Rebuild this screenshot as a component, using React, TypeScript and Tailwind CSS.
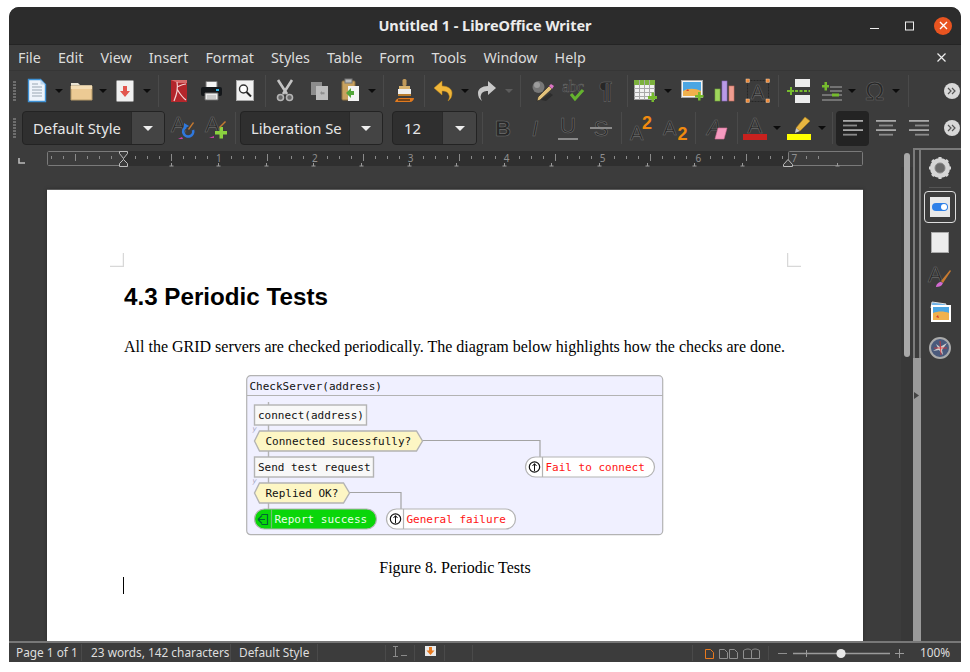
import React from "react";

const ui = "font-['Noto_Sans',sans-serif]";

function Slot({ w, children }: { w: string; children?: React.ReactNode }) {
  return <div className={`${w} flex items-center justify-center shrink-0`}>{children}</div>;
}
const Sep = ({ w }: { w: string }) => (
  <Slot w={w}><div className="w-px h-[32px] bg-[#4a4a4a]" /></Slot>
);
const Arrow = ({ w, c = "#0c0c0c" }: { w: string; c?: string }) => (
  <Slot w={w}><svg width="8" height="4"><path d="M0 0h8L4 4z" fill={c} /></svg></Slot>
);
const Grip = () => (
  <Slot w="w-[12px]">
    <div className="flex flex-col gap-[1px] -ml-[2px]">
      {Array.from({ length: 7 }).map((_, i) => <div key={i} className="w-[3px] h-[2px] bg-[#6e6e6e]" />)}
    </div>
  </Slot>
);
const Ic = ({ w = 24, h = 24, children }: { w?: number; h?: number; children: React.ReactNode }) => (
  <svg width={w} height={h} viewBox={`0 0 ${w} ${h}`} className="overflow-visible">{children}</svg>
);
const DarkA = ({ x, y, s, c = "#272727" }: { x: number; y: number; s: number; c?: string }) => (
  <text x={x} y={y} fontSize={s} fontFamily="Liberation Sans" fill={c} stroke="#6c6c6c" strokeWidth="0.6">A</text>
);
const Overflow = () => (
  <div className="w-[16px] h-[16px] rounded-full bg-[#d8d8d8] flex items-center justify-center">
    <svg width="10" height="8"><path d="M1 1l3 3-3 3M5 1l3 3-3 3" fill="none" stroke="#555" strokeWidth="1.2" /></svg>
  </div>
);

const IconNew = () => (
  <Ic w={18} h={23}>
    <path d="M.5.5h12l5 5v17H.5z" fill="#eef4fb" stroke="#3f92d6" strokeWidth="1.4" />
    <path d="M12.5.5v5h5z" fill="#bcd6ee" />
    {[5, 8, 11, 14, 17].map((y) => <path key={y} d={`M4 ${y}h${y === 5 ? 6 : 10}`} stroke="#9aa7b3" />)}
  </Ic>
);
const IconFolder = () => (
  <Ic w={23} h={21}>
    <path d="M1 3h7l2 2h12v15H1z" fill="#e8e2d2" />
    <path d="M1 6h21v14H1z" fill="#ecca94" stroke="#b69a68" />
    <path d="M1 6h21v3H1z" fill="#f4ddb4" />
  </Ic>
);
const IconSave = () => (
  <Ic w={18} h={22}>
    <rect x=".5" y=".5" width="17" height="21" rx="1" fill="#f0f0f0" stroke="#999" />
    <path d="M7 6h4v5h3l-5 6-5-6h3z" fill="#e2564e" />
  </Ic>
);
const IconPdf = () => (
  <Ic w={16} h={22}>
    <rect width="16" height="22" fill="#b3262b" />
    <path d="M0 0h16v3H7z" fill="#d76a6a" />
    <path d="M3 21C6 14 7 7 6 2M6 9c3 5 6 9 9 11M6 7c2-1 6-3 9-3" stroke="#f4d4d4" strokeWidth="1.2" fill="none" />
  </Ic>
);
const IconPrint = () => (
  <Ic w={21} h={20}>
    <path d="M5 .5h11v6H5z" fill="#f4f4f4" stroke="#777" />
    <rect y="6" width="21" height="9" rx="2" fill="#14171a" />
    <rect x="15" y="8" width="3" height="2" fill="#35b5e5" />
    <path d="M4 12h13v7H4z" fill="#ededed" stroke="#666" />
    <path d="M6 15h9M6 17h9" stroke="#aaa" />
  </Ic>
);
const IconPreview = () => (
  <Ic w={18} h={21}>
    <rect x=".5" y=".5" width="17" height="20" fill="#f1f1f1" stroke="#aaa" />
    <circle cx="7.5" cy="9" r="4" fill="#fff" stroke="#333" strokeWidth="1.4" />
    <path d="M10.5 12l4.5 4.5" stroke="#222" strokeWidth="2" />
  </Ic>
);
const IconCut = () => (
  <Ic w={18} h={23}>
    <path d="M2 1l9 14M16 1L7 15" stroke="#c4c4c4" strokeWidth="2.6" />
    <circle cx="4.5" cy="18.5" r="3" fill="#666" stroke="#b5b5b5" strokeWidth="1.6" />
    <circle cx="13.5" cy="18.5" r="3" fill="#666" stroke="#b5b5b5" strokeWidth="1.6" />
  </Ic>
);
const IconCopy = () => (
  <Ic w={19} h={20}>
    <rect x="1" y="1" width="11" height="13" fill="#8c8c8c" />
    <rect x="6" y="5" width="12" height="14" fill="#bdbdbd" />
    <path d="M10 12l2-2v1.2h2.5v2H12V14z" fill="#8f8f8f" />
  </Ic>
);
const IconPaste = () => (
  <Ic w={19} h={23}>
    <rect x="1" y="2" width="13" height="19" rx="1" fill="#c9a25f" stroke="#8d7141" />
    <rect x="4" y="0" width="7" height="4" fill="#bbb" stroke="#777" />
    <rect x="7" y="7" width="11" height="15" fill="#f4f4f4" />
    <path d="M5 14l5-5v3h3v4h-3v3z" fill="#52a639" />
  </Ic>
);
const IconClone = () => (
  <Ic w={21} h={24}>
    <rect x="8.5" y="0" width="4" height="7" rx="1.5" fill="#c19a5a" />
    <rect x="5" y="7" width="11" height="3" fill="#d9b36f" />
    <rect x="4" y="10" width="13" height="5" fill="#eeeeee" />
    <rect x="4" y="15" width="13" height="2" fill="#b87c2e" />
    <path d="M1 23c1-3 3-4 5-4h14c0 2-2 4-4 4z" fill="#e07a1f" />
    <path d="M4 21h12" stroke="#111" />
  </Ic>
);
const IconUndo = () => (
  <Ic w={20} h={22}>
    <path d="M9 1L1 8l8 7v-4c4 0 6 1 7 4 1 2 0 4-1 6 3-2 4-5 4-8 0-4-4-7-10-7z" fill="#f0b63a" stroke="#c58a17" strokeWidth=".5" />
  </Ic>
);
const IconRedo = () => (
  <Ic w={20} h={22}>
    <path d="M11 1l8 7-8 7v-4c-4 0-6 1-7 4-1 2 0 4 1 6-3-2-4-5-4-8 0-4 4-7 10-7z" fill="#c8c8c8" />
  </Ic>
);
const IconFind = () => (
  <Ic w={22} h={22}>
    <circle cx="6.5" cy="7" r="6" fill="#777" />
    <circle cx="5" cy="5" r="3" fill="#9c9c9c" />
    <path d="M9 20l9-7 3 2-7 6z" fill="#2c2c2c" />
    <path d="M17 6l3 3L8 20l-3 1 1-4z" fill="#e3c27a" stroke="#222" strokeWidth=".6" />
    <path d="M17 6l2-2 3 2-2 3z" fill="#dc74c4" />
  </Ic>
);
const IconSpell = () => (
  <Ic w={26} h={22}>
    <text x="1" y="12" fontSize="16" fontFamily="Liberation Serif" fill="#272727" stroke="#6c6c6c" strokeWidth=".5">abc</text>
    <path d="M10 14l4 5 8-9" fill="none" stroke="#64b32e" strokeWidth="3" />
  </Ic>
);
const IconPil = () => (
  <Ic w={18} h={22}>
    <text x="1" y="19" fontSize="24" fontFamily="Liberation Sans" fontWeight="bold" fill="#272727" stroke="#6c6c6c" strokeWidth=".5">¶</text>
  </Ic>
);
const IconTable = () => (
  <Ic w={23} h={22}>
    <rect x=".5" y=".5" width="20" height="19" fill="#f2f2f2" stroke="#9a9a9a" />
    <rect width="21" height="5" fill="#7cb13d" />
    {[5, 10, 15].map((x) => <path key={x} d={`M${x + .5} 0v20`} stroke="#a8a8a8" />)}
    {[8, 12, 16].map((y) => <path key={y} d={`M0 ${y + .5}h21`} stroke="#a8a8a8" />)}
    <path d="M14 16h3.5v-3.5h2.5V16h3v3h-3v3h-2.5v-3H14z" fill="#76bb2e" />
  </Ic>
);
const IconImage = () => (
  <Ic w={23} h={21}>
    <rect x=".5" y=".5" width="21" height="17" fill="#f4f4f4" stroke="#aaa" />
    <rect x="2" y="2" width="18" height="14" fill="#4ba6e3" />
    <path d="M2 11c5-3 12-3 18 0v5H2z" fill="#f0b14c" />
    <path d="M5 11l2-2 1 2z" fill="#d93b2a" />
    <path d="M14 15h3v-3h2.5v3h3v2.5h-3v3H17v-3h-3z" fill="#76bb2e" />
  </Ic>
);
const IconChart = () => (
  <Ic w={20} h={20}>
    <rect x="0" y="8" width="5" height="12" fill="#9fd65c" stroke="#79a83f" strokeWidth=".6" />
    <rect x="7" y="0" width="5" height="20" fill="#b99ae6" stroke="#8d6cc2" strokeWidth=".6" />
    <rect x="14" y="5" width="5" height="15" fill="#ef9d90" stroke="#c76e60" strokeWidth=".6" />
  </Ic>
);
const IconBox = () => (
  <Ic w={24} h={24}>
    <rect x="1.5" y="1.5" width="21" height="21" fill="none" stroke="#272727" strokeDasharray="2 1" />
    <DarkA x={5} y={20} s={20} />
    {[[0, 0], [20, 0], [0, 20], [20, 20]].map(([x, y]) => <rect key={`${x}${y}`} x={x} y={y} width="3.4" height="3.4" fill="#ef8a3a" stroke="#f7d3b0" strokeWidth=".5" />)}
  </Ic>
);
const IconBreak = () => (
  <Ic w={24} h={24}>
    <rect x="8" y="0" width="15" height="8" fill="#ececec" />
    <rect x="8" y="16" width="15" height="8" fill="#ececec" />
    <path d="M8 12h15" stroke="#76bb2e" strokeWidth="2" strokeDasharray="3 1.5" />
    <path d="M0 11h3V8h2v3h2v2H5v3H3v-3H0z" fill="#76bb2e" />
  </Ic>
);
const IconField = () => (
  <Ic w={20} h={20}>
    <path d="M0 4h2.5V1h2.5v3h2v2.5H5v3H2.5v-3H0z" fill="#76bb2e" />
    <path d="M8 6h12M8 10h12M0 14h20M0 19h20" stroke="#a9a9a9" />
    <rect x="10" y="12.5" width="7" height="3" fill="#76bb2e" />
  </Ic>
);
const IconOmega = () => (
  <Ic w={22} h={22}>
    <text x="1" y="20" fontSize="26" fontFamily="Liberation Sans" fill="#272727" stroke="#6c6c6c" strokeWidth=".5">Ω</text>
  </Ic>
);
const IconUpdate = () => (
  <Ic w={24} h={24}>
    <DarkA x={0} y={16} s={22} />
    <path d="M15 11a5 5 0 1 0 7 3" fill="none" stroke="#2f78dd" strokeWidth="2.6" />
    <path d="M13 7l5 3-5 3z" fill="#2f78dd" />
    <path d="M17 13l5-7 1 1-5 7z" fill="#c77a30" />
    <path d="M7 23l4-2 1 2z" fill="#c93fa5" />
  </Ic>
);
const IconNewStyle = () => (
  <Ic w={24} h={24}>
    <DarkA x={1} y={16} s={22} />
    <path d="M11 15h4.5v-4h3.5v4h4v3.5h-4v4h-3.5v-4H11z" fill="#8bd13f" />
    <path d="M15 11l6-6 1 1-6 6z" fill="#c77a30" />
    <path d="M5 22l5-2v2z" fill="#c93fa5" />
  </Ic>
);
const Letter = ({ t, cls }: { t: string; cls: string }) => (
  <span className={`font-['Liberation_Sans',sans-serif] text-[#272727] [-webkit-text-stroke:0.6px_#6e6e6e] ${cls}`}>{t}</span>
);
const IconSup = () => (
  <Ic w={24} h={24}>
    <DarkA x={1} y={24} s={20} />
    <text x="13" y="13" fontSize="18" fontWeight="bold" fontFamily="Liberation Sans" fill="#f08a0f">2</text>
  </Ic>
);
const IconSub = () => (
  <Ic w={24} h={24}>
    <DarkA x={0} y={19} s={20} />
    <text x="14.5" y="24" fontSize="18" fontWeight="bold" fontFamily="Liberation Sans" fill="#f08a0f">2</text>
  </Ic>
);
const IconClear = () => (
  <Ic w={22} h={22}>
    <text x="2" y="18" fontSize="22" fontStyle="italic" fontFamily="Liberation Sans" fill="#272727" stroke="#6c6c6c" strokeWidth=".5">A</text>
    <path d="M13 11h9l-3 11H10z" fill="#f59abf" stroke="#d86e98" strokeWidth=".6" />
  </Ic>
);
const IconColor = () => (
  <Ic w={24} h={24}>
    <DarkA x={4.5} y={17} s={22} />
    <rect y="18" width="24" height="6" fill="#c9211e" />
  </Ic>
);
const IconHigh = () => (
  <Ic w={24} h={24}>
    <path d="M9 12l9-11 5 4-10 10z" fill="#e8b640" stroke="#a67c1f" strokeWidth=".6" />
    <path d="M9 12l4 3-5 2z" fill="#c9c9c9" />
    <rect y="18" width="24" height="6" fill="#ffff00" />
  </Ic>
);
const AlignIc = ({ rows }: { rows: [number, number][] }) => (
  <Ic w={20} h={16}>
    {rows.map(([x, w], i) => <rect key={i} x={x} y={i * 4.6} width={w} height="1.8" fill={i % 2 ? "#8a8a8a" : "#a9a9a9"} />)}
  </Ic>
);
const Combo = ({ w, btn = "w-[33px]", pl, text }: { w: string; btn?: string; pl: string; text: string }) => (
  <div className={`${w} h-[34px] flex shrink-0 rounded-[4px] border border-[#232323] bg-[#2f2f2f] overflow-hidden`}>
    <div className={`flex-1 ${pl} text-[14.8px] leading-[32px] text-[#e6e6e6] whitespace-nowrap overflow-hidden`}>{text}</div>
    <div className={`${btn} bg-[#444] border-l border-[#2a2a2a] flex items-center justify-center`}>
      <svg width="10" height="5"><path d="M0 0h10L5 5z" fill="#eee" /></svg>
    </div>
  </div>
);

const Ruler = () => {
  const x0 = 76;
  const inch = 95.9;
  const marks: React.ReactNode[] = [];
  for (let i = -6; i <= 58; i++) {
    const x = Math.round(x0 + (i * inch) / 8) + 0.5;
    if (x < 2 || x > 815) continue;
    if (i % 8 === 0) continue;
    const half = i % 4 === 0;
    marks.push(<path key={i} d={half ? `M${x} 3v7` : `M${x} 5v3`} stroke="#8a8a8a" />);
  }
  for (let i = 1; i <= 15; i++) {
    const x = Math.round(x0 + i * 47.6) + 0.5;
    marks.push(<path key={`t${i}`} d={`M${x} 12v3M${x - 2} 15h4`} stroke="#9a9a9a" fill="none" />);
  }
  return (
    <svg width="816" height="16" className="block">
      <rect width="816" height="15" fill="#2f2f2f" />
      <rect x=".5" y=".5" width="76" height="14" rx="1" fill="#3c3c3c" stroke="#7a7a7a" />
      <rect x="741.5" y=".5" width="74" height="14" rx="1" fill="#3c3c3c" stroke="#7a7a7a" />
      {marks}
      {[1, 2, 3, 4, 5, 6, 7].map((n) => (
        <text key={n} x={x0 + n * inch} y="11" fontSize="10" textAnchor="middle" fontFamily="Noto Sans" fill="#8f8f8f">{n}</text>
      ))}
      <path d="M72.5.5h8v2l-4 5-4-5zM76.5 8.5l4 4v3h-8v-3z" fill="#3c3c3c" stroke="#bdbdbd" />
      <path d="M736.5 15.5h9v-2l-4.5-5-4.5 5z" fill="#3c3c3c" stroke="#bdbdbd" />
    </svg>
  );
};

const Tag = ({ x, y, w, t, hex }: { x: number; y: number; w: number; t: string; hex?: boolean }) =>
  hex ? (
    <g>
      <path d={`M${x + 5} ${y}H${x + w - 6}L${x + w} ${y + 10}L${x + w - 6} ${y + 20}H${x + 5}L${x} ${y + 10}z`} fill="#fdf6c4" stroke="#b3b3b3" strokeWidth="1.4" />
      <text x={x + 11} y={y + 14} fontSize="11" fontFamily="DejaVu Sans Mono" fill="#111">{t}</text>
    </g>
  ) : (
    <g>
      <rect x={x} y={y} width={w} height="20" fill="#f8f8f8" stroke="#b3b3b3" strokeWidth="1.4" />
      <text x={x + 3.5} y={y + 14} fontSize="11" fontFamily="DejaVu Sans Mono" fill="#111">{t}</text>
    </g>
  );
const Exit = ({ x, y, w, t }: { x: number; y: number; w: number; t: string }) => (
  <g>
    <rect x={x} y={y} width={w} height="20" rx="10" fill="#fff" stroke="#b3b3b3" strokeWidth="1.2" />
    <path d={`M${x + 17} ${y}v20`} stroke="#b3b3b3" strokeWidth="1.2" />
    <circle cx={x + 9} cy={y + 10} r="5.2" fill="#fff" stroke="#111" strokeWidth="1.2" />
    <path d={`M${x + 9} ${y + 14}v-7M${x + 7} ${y + 9}l2-2.4 2 2.4`} stroke="#111" fill="none" />
    <text x={x + 20} y={y + 14} fontSize="11" fontFamily="DejaVu Sans Mono" fill="#ff1414">{t}</text>
  </g>
);
const Diagram = () => (
  <svg width="418" height="161" className="block">
    <rect x=".7" y=".7" width="416" height="159" rx="4" fill="#f0f0ff" stroke="#b3b3b3" strokeWidth="1.2" />
    <path d="M1 20.5h416" stroke="#b3b3b3" strokeWidth="1.2" />
    <text x="3.5" y="14.5" fontSize="11" fontFamily="DejaVu Sans Mono" fill="#111">CheckServer(address)</text>
    <path d="M22.5 27v120" stroke="#b3b3b3" strokeWidth="1.4" />
    <path d="M175 65.5h119v21M103 117.5h52v21" fill="none" stroke="#a3a3a3" strokeWidth="1.2" />
    <text x="6.5" y="56" fontSize="7" fontFamily="DejaVu Sans" fontStyle="italic" fill="#a3a3c0">y</text>
    <text x="6.5" y="108" fontSize="7" fontFamily="DejaVu Sans" fontStyle="italic" fill="#a3a3c0">y</text>
    <Tag x={8.5} y={30} w={112} t="connect(address)" />
    <Tag x={8.5} y={56} w={168} t="Connected sucessfully?" hex />
    <Tag x={8.5} y={82} w={119} t="Send test request" />
    <Tag x={8.5} y={108} w={95} t="Replied OK?" hex />
    <rect x="8.5" y="134" width="122" height="20" rx="10" fill="#0ad60a" stroke="#b3b3b3" strokeWidth="1.2" />
    <path d="M25.5 134v20" stroke="#6fbf6f" strokeWidth="1.2" />
    <path d="M15.5 139.5h6v10h-6M12 144.5l4-4M12 144.5l4 4M12 144.5h7" fill="none" stroke="#063" strokeWidth="1.2" />
    <text x="28.5" y="148" fontSize="11" fontFamily="DejaVu Sans Mono" fill="#e9ffe9">Report success</text>
    <Exit x={279.5} y={82} w={129} t="Fail to connect" />
    <Exit x={140.5} y={134} w={129} t="General failure" />
  </svg>
);

const Menu = ["File", "Edit", "View", "Insert", "Format", "Styles", "Table", "Form", "Tools", "Window", "Help"];

export default function App() {
  return (
    <div className={`w-[970px] h-[672px] bg-white pl-[9px] pt-[7px] overflow-hidden ${ui}`}>
      <div className="w-[952px] h-[655px] flex flex-col bg-[#3c3c3c] rounded-t-[10px] overflow-hidden">
        {/* title */}
        <div className="h-[38px] shrink-0 bg-[#2c2c2c] relative flex items-center justify-center border-b border-[#242424]">
          <span className="text-[14.5px] font-bold text-[#ececec]">Untitled 1 - LibreOffice Writer</span>
          <div className="absolute right-[9px] top-0 h-full flex items-center">
            <svg width="10" height="10"><path d="M0 7.5h9" stroke="#eee" strokeWidth="1.2" /></svg>
            <svg width="10" height="10" className="ml-[25px]"><rect x=".5" y="1" width="8" height="8" fill="none" stroke="#eee" /></svg>
            <div className="w-[18px] h-[18px] ml-[19px] rounded-full bg-[#e95420] flex items-center justify-center">
              <svg width="9" height="9"><path d="M1 1l7 7M8 1l-7 7" stroke="#fff" strokeWidth="1.4" /></svg>
            </div>
          </div>
        </div>
        {/* menu */}
        <div className="h-[25px] shrink-0 flex items-center pl-[9px] gap-[17px] text-[14.3px] text-[#dcdcdc] relative">
          {Menu.map((m) => <span key={m}>{m}</span>)}
          <svg width="9" height="9" className="absolute left-[928px] top-[8px]"><path d="M.5.5l8 8M8.5.5l-8 8" stroke="#eee" strokeWidth="1.2" /></svg>
        </div>
        {/* toolbar 1 */}
        <div className="h-[40px] shrink-0 flex items-center border-t border-[#363636]">
          <Grip />
          <Slot w="w-[32px]"><IconNew /></Slot><Arrow w="w-[12px]" />
          <Slot w="w-[32px]"><IconFolder /></Slot><Arrow w="w-[12px]" />
          <Slot w="w-[32px]"><IconSave /></Slot><Arrow w="w-[12px]" />
          <Sep w="w-[10px]" />
          <Slot w="w-[32px]"><IconPdf /></Slot>
          <Slot w="w-[33px]"><IconPrint /></Slot>
          <Slot w="w-[34px]"><IconPreview /></Slot>
          <Sep w="w-[6px]" />
          <Slot w="w-[34px]"><IconCut /></Slot>
          <Slot w="w-[34px]"><IconCopy /></Slot>
          <Slot w="w-[28px]"><IconPaste /></Slot><Arrow w="w-[16px]" />
          <Sep w="w-[6px]" />
          <Slot w="w-[36px]"><IconClone /></Slot>
          <Sep w="w-[4px]" />
          <Slot w="w-[34px]"><IconUndo /></Slot><Arrow w="w-[10px]" />
          <Slot w="w-[34px]"><IconRedo /></Slot><Arrow w="w-[10px]" c="#5c5c5c" />
          <Sep w="w-[12px]" />
          <Slot w="w-[34px]"><IconFind /></Slot>
          <Slot w="w-[28px]"><IconSpell /></Slot>
          <Slot w="w-[38px]"><IconPil /></Slot>
          <Sep w="w-[2px]" />
          <Slot w="w-[34px]"><IconTable /></Slot><Arrow w="w-[12px]" />
          <Slot w="w-[36px]"><IconImage /></Slot>
          <Slot w="w-[30px]"><IconChart /></Slot>
          <Slot w="w-[36px]"><IconBox /></Slot>
          <Sep w="w-[4px]" />
          <Slot w="w-[38px]"><IconBreak /></Slot>
          <Slot w="w-[28px]"><IconField /></Slot><Arrow w="w-[12px]" />
          <Slot w="w-[34px]"><IconOmega /></Slot><Arrow w="w-[8px]" />
          <Sep w="w-[16px]" />
          <div className="ml-[28px]"><Overflow /></div>
        </div>
        {/* toolbar 2 */}
        <div className="h-[38px] shrink-0 flex items-center pb-[2px]">
          <Grip />
          <div className="w-px" />
          <Combo w="w-[143px]" pl="pl-[10px]" text="Default Style" />
          <Slot w="w-[35px]"><IconUpdate /></Slot>
          <Slot w="w-[31px]"><IconNewStyle /></Slot>
          <Sep w="w-[9px]" />
          <Combo w="w-[143px]" pl="pl-[10px]" text="Liberation Se" />
          <div className="w-[9px]" />
          <Combo w="w-[85px]" btn="w-[34px]" pl="pl-[11px]" text="12" />
          <Sep w="w-[10px]" />
          <Slot w="w-[32px]"><Letter t="B" cls="text-[22px] font-bold" /></Slot>
          <Slot w="w-[32px]"><Letter t="I" cls="text-[22px] italic" /></Slot>
          <Slot w="w-[34px]"><div className="flex flex-col items-center"><Letter t="U" cls="text-[22px] leading-[20px]" /><div className="w-[20px] h-[2px] bg-[#8a8a8a] mt-[2px]" /></div></Slot>
          <Slot w="w-[32px]"><div className="relative"><Letter t="S" cls="text-[22px]" /><div className="absolute left-[-4px] right-[-4px] top-[15px] h-[2px] bg-[#8a8a8a]" /></div></Slot>
          <Sep w="w-[8px]" />
          <Slot w="w-[32px]"><IconSup /></Slot>
          <Slot w="w-[36px]"><IconSub /></Slot>
          <Sep w="w-[4px]" />
          <Slot w="w-[38px]"><IconClear /></Slot>
          <Sep w="w-[4px]" />
          <Slot w="w-[32px]"><IconColor /></Slot><Arrow w="w-[12px]" />
          <Slot w="w-[32px]"><IconHigh /></Slot><Arrow w="w-[14px]" />
          <Sep w="w-[6px]" />
          <div className="w-[33px] h-[35px] shrink-0 rounded-[4px] bg-[#232323] flex items-center justify-center ml-[1px]">
            <AlignIc rows={[[0, 20], [0, 14], [0, 20], [0, 14]]} />
          </div>
          <Slot w="w-[33px]"><AlignIc rows={[[0, 20], [3, 14], [0, 20], [3, 14]]} /></Slot>
          <Slot w="w-[34px]"><AlignIc rows={[[0, 20], [6, 14], [0, 20], [6, 14]]} /></Slot>
          <div className="ml-[8px]"><Overflow /></div>
        </div>
        {/* body */}
        <div className="flex-1 min-h-0 flex">
          <div className="w-[904px] flex flex-col shrink-0">
            <div className="h-[19px] shrink-0 flex items-end relative">
              <svg width="8" height="6" className="absolute left-[9px] top-[10px]"><path d="M1 0v5h6" fill="none" stroke="#bbb" strokeWidth="1.6" /></svg>
              <div className="ml-[38px]"><Ruler /></div>
            </div>
            <div className="flex-1 min-h-0 flex">
              <div className="w-[892px] pl-[38px] pt-[22px] shrink-0 overflow-hidden">
                <div className="w-[816px] h-[600px] bg-white border-t border-[#5c5c5c] shadow-[0_0_3px_#2c2c2c] relative pl-[77px] pr-[77px] pt-[93px] font-['Liberation_Serif',serif] text-black">
                  <svg width="14" height="14" className="absolute left-[63px] top-[63px]"><path d="M13.5 0v13.5H0" fill="none" stroke="#d8d8d8" strokeWidth="1.5" /></svg>
                  <svg width="14" height="14" className="absolute left-[740px] top-[63px]"><path d="M.5 0v13.5H14" fill="none" stroke="#d8d8d8" strokeWidth="1.5" /></svg>
                  <h1 className="font-['Liberation_Sans',sans-serif] font-bold text-[24.2px] leading-[28px]">4.3 Periodic Tests</h1>
                  <p className="mt-[27px] text-[16px] leading-[18px] whitespace-nowrap">All the GRID servers are checked periodically. The diagram below highlights how the checks are done.</p>
                  <div className="mt-[19px] flex justify-center"><Diagram /></div>
                  <p className="mt-[23px] text-center text-[16px] leading-[18px]">Figure 8. Periodic Tests</p>
                  <div className="-ml-[1px] w-px h-[17px] bg-black" />
                </div>
              </div>
              <div className="w-[12px] bg-[#383838] relative shrink-0">
                <div className="absolute left-[3px] top-[-14px] w-[6px] h-[204px] rounded-[3px] bg-[#a8a8a8]" />
              </div>
            </div>
          </div>
          {/* splitter + sidebar */}
          <div className="flex-1 flex flex-col border-t-2 border-[#7b7b7b]">
            <div className="flex-1 flex">
              <div className="w-[8px] flex flex-col shrink-0">
                <div className="h-[208px] border-l-2 border-r-2 border-[#7b7b7b]" />
                <div className="flex-1 bg-[#9a9a9a] pt-[34px] pl-[1px]">
                  <svg width="5" height="7" className="block"><path d="M0 0l5 3.5L0 7z" fill="#444" /></svg>
                </div>
              </div>
              <div className="flex-1 flex flex-col items-center pt-[7px] pr-[2px]">
                <svg width="22" height="22" viewBox="0 0 24 24">
                  <circle cx="12" cy="12" r="8" fill="none" stroke="#d5d5d5" strokeWidth="6" />
                  <path d="M12 0v24M0 12h24M3.5 3.5l17 17M20.5 3.5l-17 17" stroke="#d5d5d5" strokeWidth="3.4" />
                  <circle cx="12" cy="12" r="5.5" fill="#6a6a6a" stroke="#888" />
                </svg>
                <div className="w-[22px] h-px bg-[#555] mt-[8px]" />
                <div className="w-[32px] h-[32px] mt-[3px] rounded-[4px] border border-[#ddd] flex items-center justify-center">
                  <svg width="20" height="20">
                    <rect width="20" height="20" fill="#e9e9e9" />
                    <rect x="2" y="6" width="16" height="8" rx="4" fill="#2f80e8" />
                    <circle cx="14" cy="10" r="3" fill="#fff" />
                  </svg>
                </div>
                <div className="w-[18px] h-[21px] mt-[9px] bg-[#ececec] border border-[#aaa]" />
                <div className="mt-[11px] leading-[0]">
                  <Ic w={24} h={24}>
                    <DarkA x={0} y={18} s={22} />
                    <path d="M13 17L22 6l1 1-8 12z" fill="#c77a30" />
                    <path d="M8 23c0-3 3-5 5-5l2 1c-1 3-4 4-7 4z" fill="#d26ad0" />
                  </Ic>
                </div>
                <div className="mt-[14px] leading-[0]">
                  <Ic w={22} h={21}>
                    <path d="M3 0l14 2-1 4H2z" fill="#6fb3e8" stroke="#ddd" />
                    <rect x="2" y="3" width="20" height="17" fill="#fff" />
                    <rect x="4" y="5" width="16" height="13" fill="#4ba6e3" />
                    <path d="M4 11c5-2 11-2 16 0v7H4z" fill="#f0b14c" />
                    <path d="M7 15l2-2 1 3z" fill="#d93b2a" />
                  </Ic>
                </div>
                <div className="mt-[14px] leading-[0]">
                  <Ic w={22} h={22}>
                    <circle cx="11" cy="11" r="10" fill="#4a5a7c" stroke="#aaa" strokeWidth="2" />
                    <path d="M7 7l4 3 7-4-5 7 1 5-4-5-6 1 5-3z" fill="#cfcfcf" />
                    <path d="M5 11h13M11 4l1 14" stroke="#e03030" strokeWidth=".8" />
                  </Ic>
                </div>
              </div>
            </div>
          </div>
        </div>
        {/* status bar */}
        <div className="h-[21px] shrink-0 flex items-center border-t-2 border-[#787878] text-[11.85px] text-[#dedede]">
          <div className="w-[73px] pl-[7px] border-r border-[#4a4a4a] whitespace-nowrap">Page 1 of 1</div>
          <div className="w-[149px] pl-[9px] border-r border-[#4a4a4a] whitespace-nowrap">23 words, 142 characters</div>
          <div className="w-[87px] pl-[8px] border-r border-[#4a4a4a] whitespace-nowrap">Default Style</div>
          <div className="w-[68px] h-[16px] border-r border-[#4a4a4a]" />
          <div className="w-[29px] h-[16px] border-r border-[#4a4a4a] pl-[7px]">
            <svg width="15" height="13" className="block"><path d="M0 1.5h5M2.5 1.5v10M0 11.5h5M8 10.5h6" stroke="#8a8a8a" fill="none" /></svg>
          </div>
          <div className="w-[30px] h-[16px] border-r border-[#4a4a4a] pl-[10px] pt-[1px]">
            <svg width="11" height="10" className="block"><rect width="11" height="10" fill="#e9e9e9" /><path d="M4 1h3v3.5h2.5L5.5 9 1.5 4.5H4z" fill="#e8791e" /></svg>
          </div>
          <div className="w-[28px] h-[16px] border-r border-[#4a4a4a]" />
          <div className="w-[220px] h-[16px] border-r border-[#4a4a4a]" />
          <svg width="222" height="14" className="block shrink-0">
            <path d="M12.5 12.5V3.5h5l3 3v6z" fill="none" stroke="#e8791e" />
            <path d="M26.5 12.5v-9h5l3 3v6zM36.5 12.5v-9h5l3 3v6zM50.5 12.5v-8c3-2 6-2 8 0 2-2 5-2 8 0v8zM58.5 4.5v8" fill="none" stroke="#8f8f8f" />
            <path d="M75.5 0v14" stroke="#4a4a4a" />
            <path d="M85 7.5h9" stroke="#8f8f8f" />
            <path d="M100 7.5h97" stroke="#9a9a9a" strokeWidth="1.6" />
            <path d="M113.5 4v7" stroke="#9a9a9a" />
            <circle cx="148" cy="7.5" r="4.6" fill="#e8e8e8" />
            <path d="M202 7.5h9M206.5 3v9" stroke="#9a9a9a" />
          </svg>
          <span className="ml-[5px]">100%</span>
        </div>
      </div>
    </div>
  );
}
